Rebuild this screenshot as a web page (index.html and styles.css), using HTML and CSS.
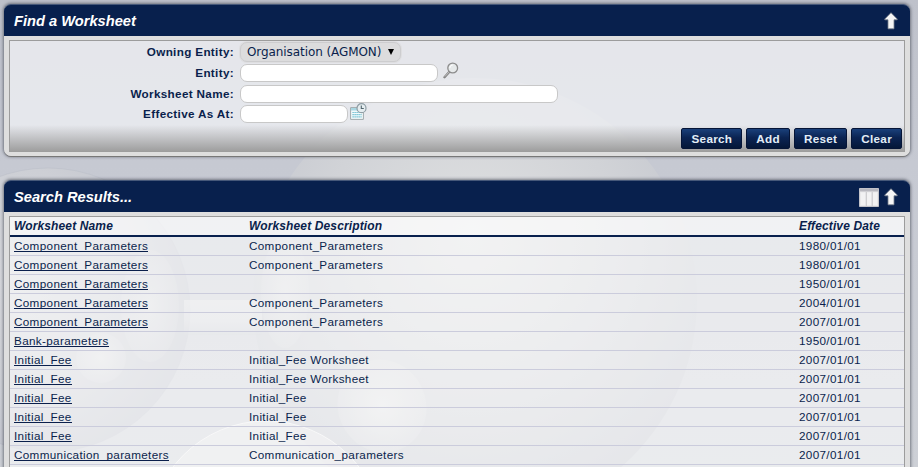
FILE: index.html
```html
<!DOCTYPE html>
<html lang="en">
<head>
<meta charset="utf-8">
<title>Find a Worksheet</title>
<link rel="stylesheet" href="styles.css">
</head>
<body>
<svg class="backdrop" width="918" height="467" viewBox="0 0 918 467" aria-hidden="true">
  <defs>
    <radialGradient id="ball" cx=".49" cy=".36" r=".66">
      <stop offset="0" stop-color="#dfe0e1"/><stop offset=".5" stop-color="#d1d3d7"/><stop offset="1" stop-color="#bfc2cb"/>
    </radialGradient>
    <radialGradient id="small" cx=".35" cy=".4" r=".68">
      <stop offset="0" stop-color="#d6d8dc"/><stop offset=".6" stop-color="#cdcfd5"/><stop offset="1" stop-color="#bfc2cb"/>
    </radialGradient>
    <radialGradient id="shine">
      <stop offset="0" stop-color="#f0f0ee" stop-opacity=".75"/><stop offset="1" stop-color="#ececeb" stop-opacity=".25"/>
    </radialGradient>
    <linearGradient id="page" x1="0" y1="0" x2="0" y2="1">
      <stop offset="0" stop-color="#bec1ca"/><stop offset=".35" stop-color="#c6c9d2"/><stop offset="1" stop-color="#cdd0d6"/>
    </linearGradient>
    <linearGradient id="tube" x1="0" y1="0" x2="0" y2="1">
      <stop offset="0" stop-color="#e2e3e4" stop-opacity=".6"/><stop offset=".6" stop-color="#e2e3e4" stop-opacity=".4"/><stop offset="1" stop-color="#c2c5cc" stop-opacity=".4"/>
    </linearGradient>
  </defs>
  <rect width="918" height="467" fill="url(#page)"/>
  <circle cx="48" cy="310" r="142" fill="url(#small)" stroke="#b9bdc7" stroke-opacity=".5"/>
  <circle cx="475" cy="300" r="222" fill="url(#ball)"/>
  <rect x="184" y="300" width="78" height="35" fill="url(#tube)"/>
  <ellipse cx="150" cy="306" rx="29" ry="56" fill="url(#shine)" opacity=".5"/>
  <ellipse cx="285" cy="292" rx="24" ry="56" fill="url(#shine)" opacity=".5"/>
  <ellipse cx="101" cy="358" rx="25" ry="25" fill="url(#shine)" opacity=".6"/>
  <ellipse cx="382" cy="406" rx="44" ry="47" fill="url(#shine)" opacity=".75" transform="rotate(-25 382 406)"/>
  <circle cx="266" cy="538" r="117" fill="#e4e5e6" fill-opacity=".6" stroke="#eeeeef"/>
</svg>

<main class="page">
  <section class="panel">
    <header class="panel-head">
      <h2>Find a Worksheet</h2>
      <svg class="up" width="14" height="18" viewBox="0 0 14 18"><path d="M7 .7 13.2 7v.8H10v9H4v-9H.8V7z" fill="#f5f5f5" stroke="#777d8a" stroke-width=".8"/></svg>
    </header>
    <div class="panel-body">
      <form class="inner search">
        <div class="field first"><label>Owning Entity:</label><div class="select"><span>Organisation (AGMON)</span><i></i></div></div>
        <div class="field"><label>Entity:</label><div class="input medium"></div>
          <svg class="lens" width="16" height="17" viewBox="0 0 16 17"><path d="M6.2 10 1.5 15.2" stroke="#858585" stroke-width="2.4" stroke-linecap="round"/><path d="M6 10 1.8 14.6" stroke="#c9c9c9" stroke-width=".8"/><circle cx="9.7" cy="6" r="4.9" fill="#e6e9ea" stroke="#8c8c8c" stroke-width="1.3"/><path d="M6.8 6a3 3 0 0 1 3-3" fill="none" stroke="#fff"/></svg>
        </div>
        <div class="field"><label>Worksheet Name:</label><div class="input wide"></div></div>
        <div class="field"><label>Effective As At:</label><div class="input narrow"></div>
          <svg class="calendar" width="17" height="17" viewBox="0 0 17 17"><path d="M.6 4.6h12.8v11.8H.6z" fill="#f2fafb" stroke="#a0a8ac"/><path d="M1 5h12v2.5H1z" fill="#a9d7e2"/><path d="M2.5 9.5h9M2.5 11.7h9M2.5 13.9h9" stroke="#58b5cb" stroke-width="1.2" stroke-dasharray="1.2 .8"/><circle cx="11.5" cy="5.2" r="4.5" fill="#e5edf0" stroke="#8e9da4" stroke-width="1.2"/><path d="M11.3 2.5v3h2.5" fill="none" stroke="#53666e" stroke-width="1.1"/></svg>
        </div>
        <div class="actions">
          <button type="button">Search</button><button type="button">Add</button><button type="button">Reset</button><button type="button">Clear</button>
        </div>
      </form>
    </div>
  </section>

  <section class="panel">
    <header class="panel-head">
      <h2>Search Results...</h2>
      <svg class="columns" width="20" height="19" viewBox="0 0 20 19"><path d="M.5.5h19v18H.5z" fill="#e9e9ea" stroke="#c3c3c9"/><path d="M1 1h18v2.5H1z" fill="#b9b9c0"/><path d="M2 4.5h4.5V17H2zM8 4.5h4.5V17H8zM14 4.5h4V17h-4z" fill="#f2f2f3"/><path d="M7.3 4v14M13.2 4v14" stroke="#c7c7ca"/></svg>
      <svg class="up" width="14" height="18" viewBox="0 0 14 18"><path d="M7 .7 13.2 7v.8H10v9H4v-9H.8V7z" fill="#f5f5f5" stroke="#777d8a" stroke-width=".8"/></svg>
    </header>
    <div class="panel-body">
      <div class="inner results">
        <div class="row head"><span>Worksheet Name</span><span>Worksheet Description</span><span>Effective Date</span></div>
        <div class="row"><span><a>Component_Parameters</a></span><span>Component_Parameters</span><span>1980/01/01</span></div>
        <div class="row"><span><a>Component_Parameters</a></span><span>Component_Parameters</span><span>1980/01/01</span></div>
        <div class="row"><span><a>Component_Parameters</a></span><span></span><span>1950/01/01</span></div>
        <div class="row"><span><a>Component_Parameters</a></span><span>Component_Parameters</span><span>2004/01/01</span></div>
        <div class="row"><span><a>Component_Parameters</a></span><span>Component_Parameters</span><span>2007/01/01</span></div>
        <div class="row"><span><a>Bank-parameters</a></span><span></span><span>1950/01/01</span></div>
        <div class="row"><span><a>Initial_Fee</a></span><span>Initial_Fee Worksheet</span><span>2007/01/01</span></div>
        <div class="row"><span><a>Initial_Fee</a></span><span>Initial_Fee Worksheet</span><span>2007/01/01</span></div>
        <div class="row"><span><a>Initial_Fee</a></span><span>Initial_Fee</span><span>2007/01/01</span></div>
        <div class="row"><span><a>Initial_Fee</a></span><span>Initial_Fee</span><span>2007/01/01</span></div>
        <div class="row"><span><a>Initial_Fee</a></span><span>Initial_Fee</span><span>2007/01/01</span></div>
        <div class="row"><span><a>Communication_parameters</a></span><span>Communication_parameters</span><span>2007/01/01</span></div>
        <div class="row"></div>
      </div>
    </div>
  </section>
</main>
</body>
</html>
```
FILE: styles.css
```css
* { box-sizing: border-box; }
html, body { height: 467px; overflow: hidden; }
body {
  margin: 0;
  font: 11.7px/18px "Liberation Sans", sans-serif;
  letter-spacing: .34px;
  color: #0a1f4c;
  background: #c5c8d1;
}
.backdrop { position: absolute; top: 0; left: 0; }
.page { position: relative; display: flex; flex-direction: column; gap: 24px; padding: 4px 8px 0 4px; }

.panel {
  border-radius: 7px;
  box-shadow: 0 0 3px 1px rgba(70, 75, 88, .65);
}
.panel-head {
  display: flex;
  align-items: center;
  gap: 5px;
  height: 32px;
  padding: 2px 12px 0 10px;
  border-top: 1px solid #465879;
  border-radius: 7px 7px 0 0;
  background: #08204d;
}
.panel-head h2 {
  flex: 1;
  margin: -2px 0 0;
  font-size: 14.667px;
  font-style: italic;
  letter-spacing: 0;
  color: #fff;
}
.panel-head .up { margin-top: -1px; }
.panel-body {
  border: solid #dedede;
  border-width: 4px 5px;
  border-radius: 0 0 7px 7px;
  box-shadow: 0 1px 0 #777;
}
.inner {
  border: 1px solid #9c9c9c;
  border-bottom: 0;
  background: rgba(255, 255, 255, .59);
}
.search { background: rgba(237, 238, 241, .82); }

.field { display: flex; align-items: center; height: 20.5px; }
.field.first { height: 22px; }
.field label { width: 224px; margin-right: 6px; text-align: right; font-weight: bold; }
.input {
  height: 18px;
  border: 1px solid #c8c8c8;
  border-radius: 7px;
  background: #fff;
}
.medium { width: 198px; }
.wide { width: 318px; }
.narrow { width: 108px; }
.select {
  display: flex;
  align-items: center;
  gap: 7px;
  width: 161px;
  height: 20px;
  padding-left: 6px;
  border: 1px solid #cdcdcf;
  border-radius: 7px;
  background: #dcdcdd;
  box-shadow: 0 0 0 1px #dedee0;
  font: 12px/18px "DejaVu Sans", sans-serif;
  letter-spacing: -.08px;
}
.select i {
  border: solid transparent;
  border-width: 6px 3.5px 0;
  border-top-color: #000;
}
.lens { margin: -5px 0 0 5px; }
.calendar { margin: -5px 0 0 2px; }

.actions {
  display: flex;
  justify-content: flex-end;
  gap: 4px;
  height: 27.5px;
  padding: 3.5px 2px 0 0;
  background: linear-gradient(rgba(150, 150, 150, 0), #9c9c9c);
}
.actions button {
  height: 21px;
  padding: 0 9px;
  border: 1px solid #061537;
  border-radius: 2px;
  background: linear-gradient(#1a407a, #0b2453 45%, #051738);
  color: #e2edf7;
  font: bold 11.7px/19px "Liberation Sans", sans-serif;
  letter-spacing: .3px;
}

.row {
  display: grid;
  grid-template-columns: 235px 550px 1fr;
  height: 19px;
  padding-left: 4px;
  border-bottom: 1px solid #cbccdc;
}
.row.head {
  height: 20px;
  border-bottom: 2px solid #08204d;
  background: rgba(255, 255, 255, .4);
  font-size: 12px;
  font-weight: bold;
  font-style: italic;
  letter-spacing: .13px;
}
.row a { display: inline-block; height: 15px; line-height: 18px; border-bottom: 1px solid #0a1f4c; vertical-align: top; }
```
